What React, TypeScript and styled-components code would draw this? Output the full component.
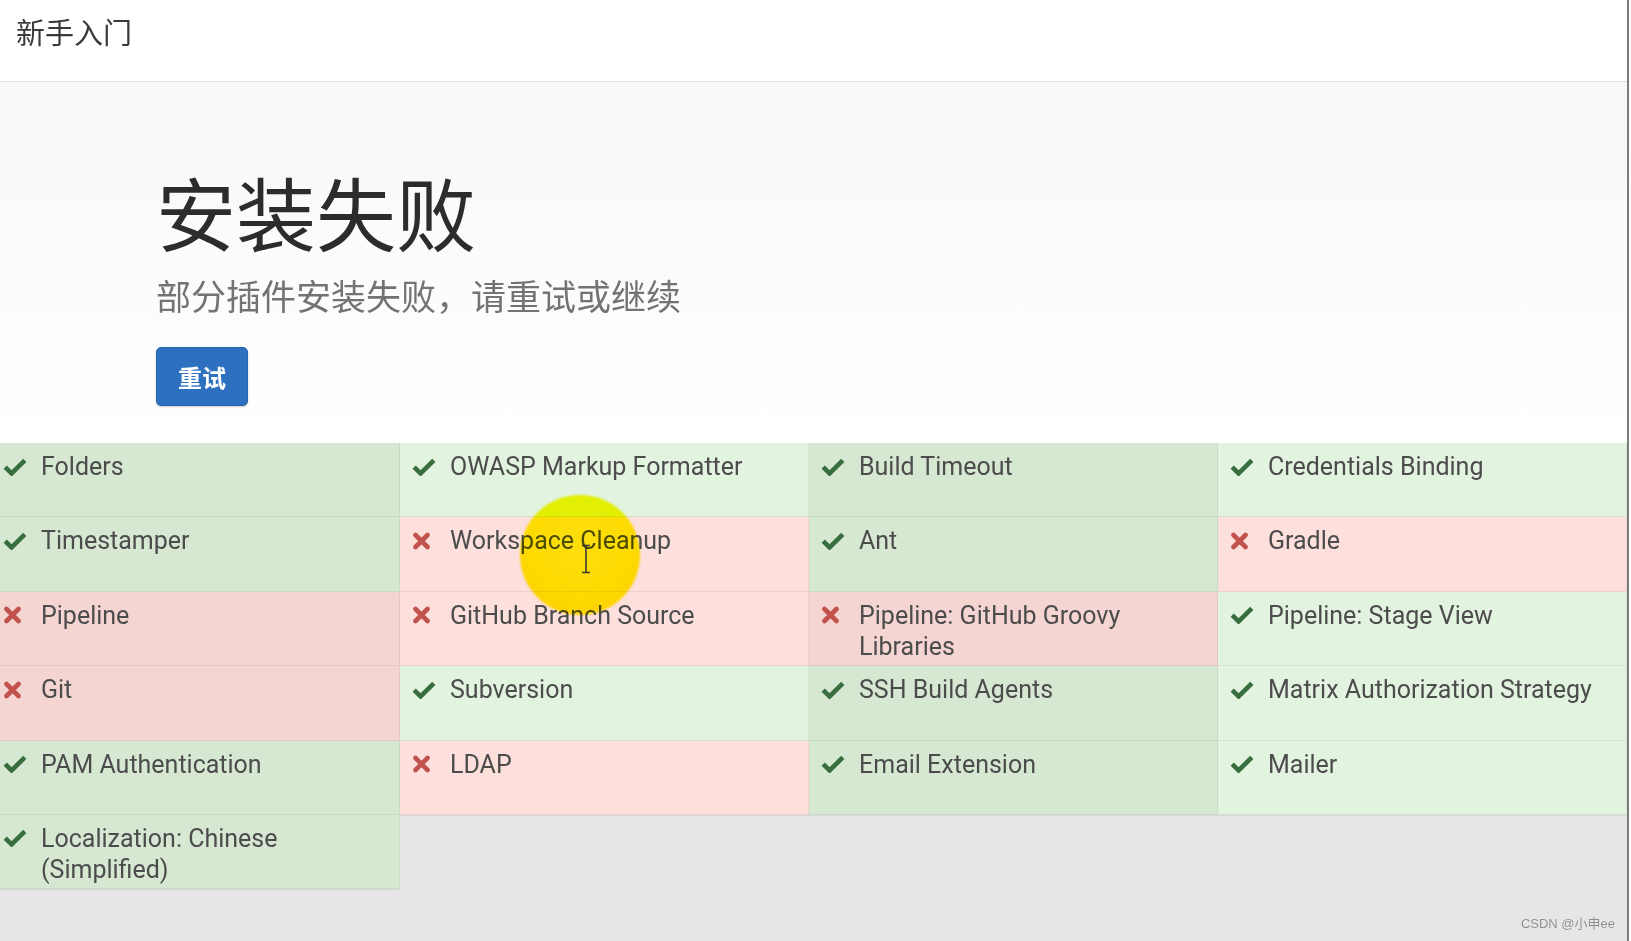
import React from "react";
import styled, { createGlobalStyle } from "styled-components";

const GlobalStyle = createGlobalStyle`
  html, body {
    margin: 0;
    padding: 0;
    height: 100%;
    background: #ffffff;
    overflow: hidden;
  }
  #root { height: 100%; }
  * { box-sizing: border-box; }
`;

const Frame = styled.div`
  position: relative;
  display: flex;
  width: 1631px;
  height: 100vh;
  background: #ffffff;
`;

const Window = styled.div`
  position: relative;
  flex: none;
  width: 1629px;
  height: 100%;
  display: flex;
  flex-direction: column;
  overflow: hidden;
  border-right: 2px solid #7c7c7c;
`;

const Header = styled.header`
  flex: none;
  height: 82px;
  display: flex;
  align-items: center;
  padding-left: 16px;
  padding-bottom: 20px;
  background: #ffffff;
  border-bottom: 1px solid #e1e1e1;
  font-family: "Noto Sans CJK SC", "Noto Sans", sans-serif;
  font-size: 29px;
  color: #3a3a3a;
`;

const Hero = styled.section`
  flex: none;
  height: 361px;
  padding: 88px 0 0 156px;
  background: linear-gradient(180deg, #f8f8f8 0%, #fbfbfb 45%, #ffffff 100%);
  font-family: "Noto Sans CJK SC", "Noto Sans", sans-serif;
`;

const Title = styled.h1`
  margin: 0;
  font-size: 80px;
  line-height: 1;
  font-weight: 400;
  color: #2c2c2c;
`;

const Subtitle = styled.p`
  margin: 27px 0 0;
  font-size: 35px;
  line-height: 1;
  color: #737373;
`;

const RetryButton = styled.button`
  display: block;
  margin-top: 35px;
  width: 92px;
  height: 59px;
  border: 1px solid #2865ad;
  border-radius: 5px;
  background: #2d70bf;
  color: #ffffff;
  font-family: "Noto Sans CJK SC", "Noto Sans", sans-serif;
  font-size: 24px;
  font-weight: 700;
  box-shadow: 0 1px 2px rgba(0, 0, 0, 0.2);
  cursor: pointer;
`;

const ListArea = styled.section`
  flex: 1;
  background: #e6e6e6;
`;

const PluginGrid = styled.div`
  display: grid;
  grid-template-columns: repeat(4, 409px);
  grid-auto-rows: 74.4px;
  margin-left: -9px;
`;

const palette = {
  ok: { dark: "#d6e8d2", light: "#e2f3df" },
  fail: { dark: "#f5d5d1", light: "#fddfdb" },
};

const PluginCell = styled.div<{ $status: "ok" | "fail"; $dark: boolean }>`
  display: flex;
  align-items: flex-start;
  padding: 8px 20px 0 12px;
  background: ${(p) => palette[p.$status][p.$dark ? "dark" : "light"]};
  border-right: 1px solid rgba(0, 0, 0, 0.05);
  border-bottom: 1px solid rgba(0, 0, 0, 0.06);
  box-shadow: 0 1px 1px rgba(0, 0, 0, 0.06);
`;

const IconSlot = styled.span`
  flex: none;
  width: 38px;
  height: 31px;
  display: flex;
  align-items: center;
`;

const PluginName = styled.span`
  font-family: Roboto, "Noto Sans", sans-serif;
  font-size: 25px;
  line-height: 31px;
  color: #4c4c4c;
`;

const Highlight = styled.div`
  position: absolute;
  left: 520px;
  top: 495px;
  width: 120px;
  height: 120px;
  border-radius: 50%;
  background: radial-gradient(circle at 50% 40%, #ffff10 0%, #fffa00 55%, #ffe800 100%);
  mix-blend-mode: multiply;
  filter: blur(1px);
  pointer-events: none;
`;

const Cursor = styled.svg`
  position: absolute;
  left: 580px;
  top: 544px;
  pointer-events: none;
`;

const Watermark = styled.div`
  position: absolute;
  right: 16px;
  bottom: 9px;
  font-family: "Liberation Sans", "Noto Sans CJK SC", sans-serif;
  font-size: 13px;
  color: #8d8d8d;
  text-shadow: 0 0 1px #ffffff;
`;

const CheckIcon = () => (
  <svg width="24" height="18" viewBox="0 0 24 18">
    <path
      d="M2.2 9.2 L8.6 15.4 L21.8 2.4"
      fill="none"
      stroke="#386e3e"
      strokeWidth="4.6"
      strokeLinejoin="miter"
    />
  </svg>
);

const CrossIcon = () => (
  <svg width="19" height="18" viewBox="0 0 19 18">
    <path
      d="M3.5 3 L15.5 15 M15.5 3 L3.5 15"
      fill="none"
      stroke="#c1524e"
      strokeWidth="4.6"
      strokeLinecap="round"
    />
  </svg>
);

type Plugin = { name: string; ok: boolean };

const plugins: Plugin[] = [
  { name: "Folders", ok: true },
  { name: "OWASP Markup Formatter", ok: true },
  { name: "Build Timeout", ok: true },
  { name: "Credentials Binding", ok: true },
  { name: "Timestamper", ok: true },
  { name: "Workspace Cleanup", ok: false },
  { name: "Ant", ok: true },
  { name: "Gradle", ok: false },
  { name: "Pipeline", ok: false },
  { name: "GitHub Branch Source", ok: false },
  { name: "Pipeline: GitHub Groovy Libraries", ok: false },
  { name: "Pipeline: Stage View", ok: true },
  { name: "Git", ok: false },
  { name: "Subversion", ok: true },
  { name: "SSH Build Agents", ok: true },
  { name: "Matrix Authorization Strategy", ok: true },
  { name: "PAM Authentication", ok: true },
  { name: "LDAP", ok: false },
  { name: "Email Extension", ok: true },
  { name: "Mailer", ok: true },
  { name: "Localization: Chinese (Simplified)", ok: true },
];

export default function App() {
  return (
    <>
      <GlobalStyle />
      <Frame>
        <Window>
          <Header>新手入门</Header>
          <Hero>
            <Title>安装失败</Title>
            <Subtitle>部分插件安装失败，请重试或继续</Subtitle>
            <RetryButton>重试</RetryButton>
          </Hero>
          <ListArea>
            <PluginGrid>
              {plugins.map((p, i) => (
                <PluginCell
                  key={p.name}
                  $status={p.ok ? "ok" : "fail"}
                  $dark={i % 4 === 0 || i % 4 === 2}
                >
                  <IconSlot>{p.ok ? <CheckIcon /> : <CrossIcon />}</IconSlot>
                  <PluginName>{p.name}</PluginName>
                </PluginCell>
              ))}
            </PluginGrid>
          </ListArea>
          <Highlight />
          <Cursor width="12" height="30" viewBox="0 0 12 30">
            <path
              d="M2 1.5 H10 M6 1.5 V28.5 M2 28.5 H10"
              fill="none"
              stroke="#3a3a2a"
              strokeWidth="1.6"
            />
          </Cursor>
        </Window>
        <Watermark>CSDN @小申ee</Watermark>
      </Frame>
    </>
  );
}
